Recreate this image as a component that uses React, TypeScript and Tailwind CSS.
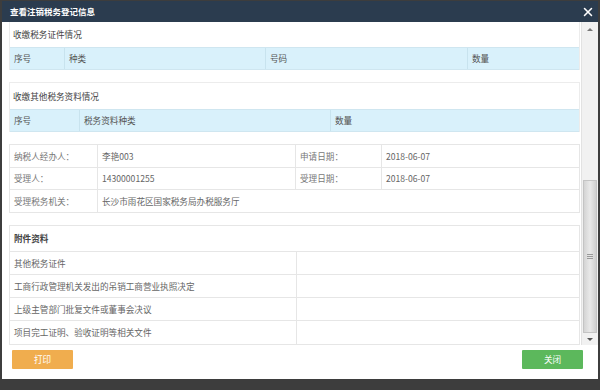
import React from 'react';
import { X } from 'lucide-react';

const font = { fontFamily: '"Microsoft YaHei", "Noto Sans CJK SC", "Noto Sans", sans-serif' };

type Col = { label: string; w?: string };

const HeaderRow = ({ cols }: { cols: Col[] }) => (
	<div className="flex h-[23px] bg-[#d9f1fb] border-y border-[#cfe6f0] text-[#555]">
		{cols.map((c, i) => (
			<div
				key={c.label}
				className={`${c.w ?? 'flex-1'} flex items-center pl-[4px] ${i > 0 ? 'border-l border-[#c8e3ee]' : ''}`}
			>
				{c.label}
			</div>
		))}
	</div>
);

const InfoCell = ({ children, className = '' }: { children?: React.ReactNode; className?: string }) => (
	<div className={`flex items-center pl-[4px] ${className}`}>{children}</div>
);

const attachments = [
	'其他税务证件',
	'工商行政管理机关发出的吊销工商营业执照决定',
	'上级主管部门批复文件或董事会决议',
	'项目完工证明、验收证明等相关文件',
];

export default function App() {
	return (
		<div className="w-[600px] h-[390px] bg-[#3d3d3d] pt-px px-[2px] overflow-hidden" style={font}>
			<div className="h-[378px] bg-white flex flex-col">
				{/* title bar */}
				<div className="h-[21px] bg-[#2b3c4f] flex items-center justify-between pl-[8px] pr-[3px]">
					<span className="text-white text-[8.5px] font-bold">查看注销税务登记信息</span>
					<X size={14} strokeWidth={2.6} color="#ffffff" />
				</div>

				{/* body */}
				<div className="h-[323px] flex text-[8.6px] text-[#666]">
					<div className="flex-1 overflow-hidden pl-[7px] pr-px">
						{/* section 1 */}
						<div className="border-x border-[#ececec]">
							<div className="h-[25px] flex items-center pl-[3px] text-[#444]">收缴税务证件情况</div>
							<HeaderRow
								cols={[
									{ label: '序号', w: 'w-[54px]' },
									{ label: '种类', w: 'w-[201px]' },
									{ label: '号码', w: 'w-[202px]' },
									{ label: '数量' },
								]}
							/>
						</div>

						{/* section 2 */}
						<div className="mt-[12px] border-x border-t border-[#ececec]">
							<div className="h-[26px] flex items-center pl-[3px] text-[#444]">收缴其他税务资料情况</div>
							<HeaderRow
								cols={[
									{ label: '序号', w: 'w-[69px]' },
									{ label: '税务资料种类', w: 'w-[251px]' },
									{ label: '数量' },
								]}
							/>
						</div>

						{/* info table */}
						<div className="mt-[12px] border border-[#e6e6e6] text-[#777]">
							<div className="flex h-[23px] border-b border-[#e6e6e6]">
								<InfoCell className="w-[87px]">纳税人经办人：</InfoCell>
								<InfoCell className="w-[198px] border-l border-[#e6e6e6] text-[#666]">李艳003</InfoCell>
								<InfoCell className="w-[86px] border-l border-[#e6e6e6]">申请日期：</InfoCell>
								<InfoCell className="flex-1 border-l border-[#e6e6e6] text-[#666]">2018-06-07</InfoCell>
							</div>
							<div className="flex h-[22px] border-b border-[#e6e6e6]">
								<InfoCell className="w-[87px]">受理人：</InfoCell>
								<InfoCell className="w-[198px] border-l border-[#e6e6e6] text-[#666]">14300001255</InfoCell>
								<InfoCell className="w-[86px] border-l border-[#e6e6e6]">受理日期：</InfoCell>
								<InfoCell className="flex-1 border-l border-[#e6e6e6] text-[#666]">2018-06-07</InfoCell>
							</div>
							<div className="flex h-[22px]">
								<InfoCell className="w-[87px]">受理税务机关：</InfoCell>
								<InfoCell className="flex-1 border-l border-[#e6e6e6] text-[#666]">长沙市雨花区国家税务局办税服务厅</InfoCell>
							</div>
						</div>

						{/* attachments */}
						<div className="mt-[12px] border border-[#e6e6e6]">
							<div className="h-[26px] flex items-center pl-[4px] font-bold text-[#444] border-b border-[#e6e6e6]">
								附件资料
							</div>
							{attachments.map((a, i) => (
								<div
									key={a}
									className={`flex h-[23px] ${i < attachments.length - 1 ? 'border-b border-[#e6e6e6]' : ''}`}
								>
									<InfoCell className="w-[286px] text-[#666]">{a}</InfoCell>
									<div className="flex-1 border-l border-[#e6e6e6]" />
								</div>
							))}
						</div>
					</div>

					{/* scrollbar */}
					<div className="w-[17px] bg-[#f1f1f1] border-l border-[#e2e2e2] flex flex-col items-center">
						<div className="h-[14px] flex items-center justify-center">
							<div className="w-0 h-0 border-x-[3px] border-x-transparent border-b-[3px] border-b-[#777]" />
						</div>
						<div className="flex-1 w-full flex flex-col">
							<div className="h-[144px]" />
							<div className="h-[153px] mx-[1px] bg-gradient-to-r from-[#d4d4d4] via-[#e9e9e9] to-[#cfcfcf] border border-[#c4c4c4] flex flex-col items-center justify-center gap-[1px]">
								<div className="w-[6px] h-px bg-[#999]" />
								<div className="w-[6px] h-px bg-[#999]" />
								<div className="w-[6px] h-px bg-[#999]" />
							</div>
						</div>
						<div className="h-[12px] flex items-center justify-center">
							<div className="w-0 h-0 border-x-[3px] border-x-transparent border-t-[3px] border-t-[#555]" />
						</div>
					</div>
				</div>

				{/* footer */}
				<div className="flex-1 flex items-start justify-between pt-[5px] pl-[10px] pr-[15px] text-[8.6px]">
					<button className="w-[61px] h-[19px] bg-[#f0ad4e] text-white rounded-[1px]">打印</button>
					<button className="w-[61px] h-[19px] bg-[#5cb85c] text-white rounded-[1px]">关闭</button>
				</div>
			</div>
		</div>
	);
}
